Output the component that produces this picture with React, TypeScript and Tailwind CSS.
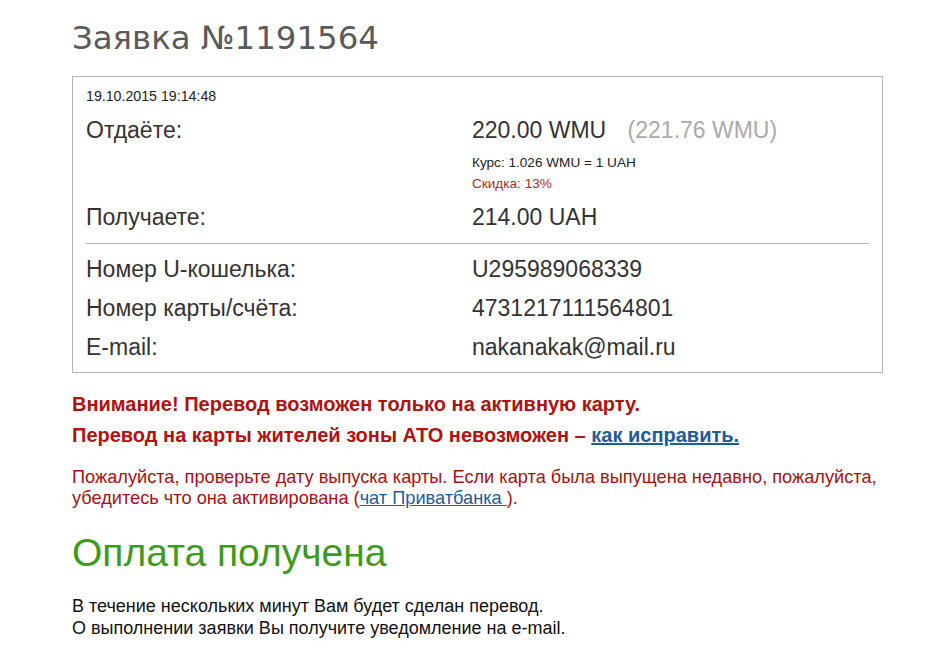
const rows = [
  { label: "Номер U-кошелька:", value: "U295989068339" },
  { label: "Номер карты/счёта:", value: "4731217111564801" },
  { label: "E-mail:", value: "nakanakak@mail.ru" },
];

export default function App() {
  return (
    <div className="min-h-[664px] bg-white pl-[72px] pt-[18px] font-['Liberation_Sans',Arial,sans-serif] text-[#333]">
      <h1 className="font-['DejaVu_Sans',sans-serif] text-[32.4px] leading-[40px] text-[#5a5a5a]">
        Заявка №1191564
      </h1>

      <div className="mt-[18px] w-[811px] border border-[#b4b4b4] px-[13px] pb-[12px] pt-[9px]">
        <div className="text-[14.2px] leading-[20px] text-[#222]">19.10.2015 19:14:48</div>

        <div className="mt-[11px] grid grid-cols-[386px_1fr] text-[23px] leading-[26px]">
          <div>Отдаёте:</div>
          <div>
            220.00 WMU <span className="ml-[15px] text-[#aaa]">(221.76 WMU)</span>
          </div>
        </div>

        <div className="mt-[9px] grid grid-cols-[386px_1fr] text-[13.6px] leading-[21px]">
          <div />
          <div>
            <div className="text-[#222]">Курс: 1.026 WMU = 1 UAH</div>
            <div className="text-[#b3262b]">Скидка: 13%</div>
          </div>
        </div>

        <div className="mt-[10px] grid grid-cols-[386px_1fr] text-[23px] leading-[26px]">
          <div>Получаете:</div>
          <div>214.00 UAH</div>
        </div>

        <div className="mt-[13px] border-t border-[#b4b4b4]" />

        <div className="mt-[12px] flex flex-col gap-[13px]">
          {rows.map((r) => (
            <div key={r.label} className="grid grid-cols-[386px_1fr] text-[23px] leading-[26px]">
              <div>{r.label}</div>
              <div>{r.value}</div>
            </div>
          ))}
        </div>
      </div>

      <div className="mt-[16px] text-[20px] font-bold leading-[31px] text-[#b0120f]">
        <div>Внимание! Перевод возможен только на активную карту.</div>
        <div>
          Перевод на карты жителей зоны АТО невозможен –{" "}
          <a href="#" className="text-[#1d5c9a] underline">
            как исправить.
          </a>
        </div>
      </div>

      <p className="mt-[16px] w-[840px] text-[18.2px] leading-[21px] text-[#a8100f]">
        Пожалуйста, проверьте дату выпуска карты. Если карта была выпущена недавно, пожалуйста,
        убедитесь что она активирована (<a href="#" className="text-[#1d5c9a] underline">чат Приватбанка </a>).
      </p>

      <h2 className="mt-[22px] text-[39px] leading-[44px] text-[#3d9a1c]">Оплата получена</h2>

      <div className="mt-[20px] text-[18px] leading-[22px] text-[#111]">
        <div>В течение нескольких минут Вам будет сделан перевод.</div>
        <div>О выполнении заявки Вы получите уведомление на e-mail.</div>
      </div>
    </div>
  );
}
